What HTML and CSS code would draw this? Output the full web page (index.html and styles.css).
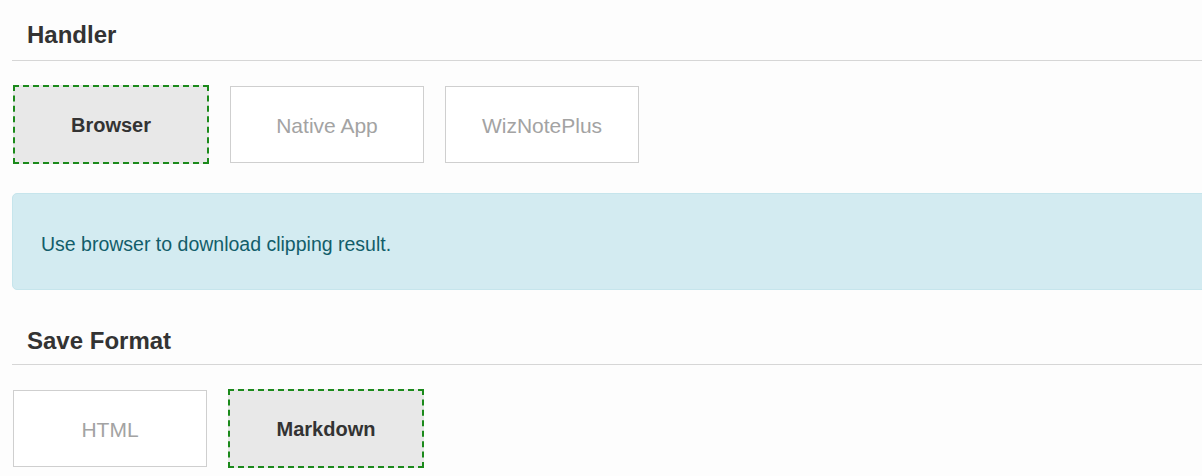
FILE: index.html
```html
<!DOCTYPE html>
<html>
<head>
<meta charset="utf-8">
<link rel="stylesheet" href="styles.css">
</head>
<body>
<main class="page">
  <section class="section">
    <h2 class="section-title">Handler</h2>
    <div class="options">
      <div class="option selected">Browser</div>
      <div class="option">Native App</div>
      <div class="option">WizNotePlus</div>
    </div>
    <div class="alert">Use browser to download clipping result.</div>
  </section>
  <section class="section second">
    <h2 class="section-title">Save Format</h2>
    <div class="options">
      <div class="option">HTML</div>
      <div class="option selected">Markdown</div>
    </div>
  </section>
</main>
</body>
</html>
```
FILE: styles.css
```css
html, body {
  margin: 0;
  padding: 0;
  overflow: hidden;
  background: #fdfdfd;
}
body {
  font-family: "Liberation Sans", Arial, Helvetica, sans-serif;
  color: #333;
}
.page {
  padding: 21px 0 0 12px;
  width: calc(100% + 20px);
  box-sizing: border-box;
}
.section-title {
  margin: 0;
  font-size: 24px;
  line-height: 27px;
  font-weight: bold;
  color: #333;
  padding: 0 0 12px 15px;
  border-bottom: 1px solid #d6d6d6;
}
.options {
  display: flex;
  align-items: center;
  gap: 21px;
  margin-top: 24px;
  padding-left: 1px;
}
.option {
  width: 192px;
  height: 73px;
  border: 1px solid #cfcfcf;
  background: #fff;
  display: flex;
  align-items: center;
  justify-content: center;
  padding-top: 2px;
  box-sizing: content-box;
  font-size: 21px;
  color: #a3a3a3;
}
.option.selected {
  border: 2px dashed #1b8a1b;
  background: #e8e8e8;
  color: #333;
  font-size: 20px;
  font-weight: bold;
}
.alert {
  margin-top: 29px;
  background: #d3ebf1;
  border: 1px solid #c6e5ec;
  border-radius: 5px;
  color: #125d6a;
  font-size: 19.5px;
  line-height: 25px;
  padding: 38px 28px 32px;
}
.second {
  margin-top: 37px;
}
.second .section-title {
  padding-bottom: 10px;
}
```
